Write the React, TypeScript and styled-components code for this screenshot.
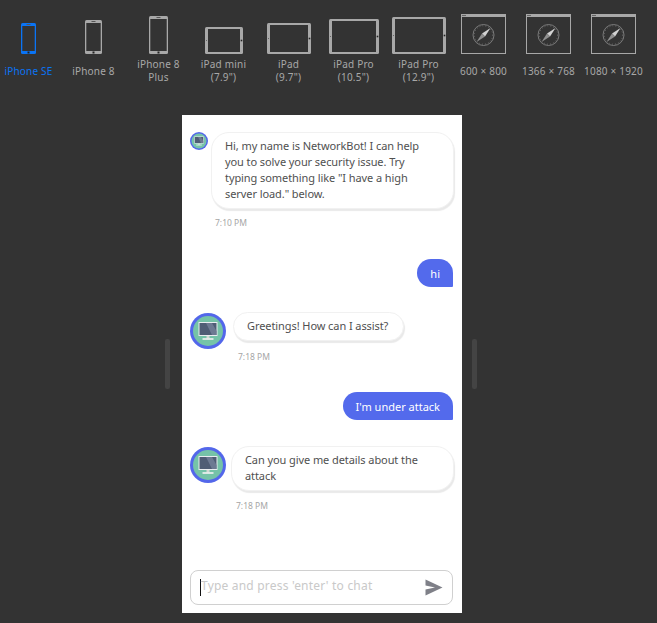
import React from "react";
import styled, { createGlobalStyle } from "styled-components";

const GlobalStyle = createGlobalStyle`
    html, body {
        margin: 0;
        height: 100%;
        background-color: #333333;
        overflow: hidden;
    }
    body {
        font-family: "Noto Sans", "Liberation Sans", sans-serif;
    }
`;

const Page = styled.div`
    width: 657px;
    height: 623px;
    overflow: hidden;
    background-color: #333333;
`;
const Toolbar = styled.div`
    display: flex;
    height: 115px;
    margin-left: -4px;
    padding-top: 14px;
    box-sizing: border-box;
`;
const DeviceTab = styled.div<{ $active?: boolean }>`
    flex: 0 0 65px;
    display: flex;
    flex-direction: column;
    align-items: center;
    color: ${(p) => (p.$active ? "#0a74f5" : "#a8a8a8")};
`;
const IconSlot = styled.div`
    height: 40px;
    display: flex;
    align-items: flex-end;
    justify-content: center;
`;
const TabLabel = styled.div`
    height: 26px;
    margin-top: 4px;
    display: flex;
    align-items: center;
    text-align: center;
    font-size: 10px;
    line-height: 13px;
    letter-spacing: 0.2px;
    white-space: pre-line;
`;
const Stage = styled.div`
    display: flex;
    align-items: center;
    padding-left: 165px;
`;
const Handle = styled.div`
    width: 5px;
    height: 50px;
    border-radius: 2px;
    background-color: #444444;
`;
const Device = styled.div`
    width: 280px;
    height: 498px;
    margin: 0 10px 0 12px;
    padding: 17px 8px 8px;
    box-sizing: border-box;
    display: flex;
    flex-direction: column;
    background-color: #ffffff;
`;
const BotRow = styled.div<{ $top: number; $gap: number }>`
    display: flex;
    align-items: flex-start;
    gap: ${(p) => p.$gap}px;
    margin-top: ${(p) => p.$top}px;
`;
const AvatarWrap = styled.div<{ $size: number; $inset: number }>`
    flex: none;
    width: ${(p) => p.$size}px;
    height: ${(p) => p.$size}px;
    margin-top: ${(p) => p.$inset}px;
    svg {
        display: block;
    }
`;
const BotColumn = styled.div<{ $fill?: boolean }>`
    display: flex;
    flex-direction: column;
    align-items: ${(p) => (p.$fill ? "stretch" : "flex-start")};
    flex: ${(p) => (p.$fill ? "1" : "none")};
    min-width: 0;
`;
const BotBubble = styled.div<{ $wide?: boolean }>`
    box-sizing: border-box;
    padding: 5px ${(p) => (p.$wide ? "20px" : "15px")} 6px 13px;
    border: 1px solid #f1f1f1;
    border-radius: 18px;
    background-color: #ffffff;
    box-shadow: 1px 2px 1px #e9e9e9;
    color: #505050;
    font-size: 11px;
    line-height: 16px;
    letter-spacing: -0.08px;
`;
const Time = styled.div<{ $gap: number; $left: number }>`
    margin: ${(p) => p.$gap}px 0 0 ${(p) => p.$left}px;
    height: 13px;
    color: #a6a6a6;
    font-size: 8.5px;
    line-height: 13px;
`;
const SentRow = styled.div<{ $top: number }>`
    display: flex;
    justify-content: flex-end;
    margin-right: 1px;
    margin-top: ${(p) => p.$top}px;
`;
const SentBubble = styled.div`
    height: 28px;
    padding: 0 13px;
    display: flex;
    align-items: center;
    border-radius: 14px 14px 1px 14px;
    background-color: #536aec;
    color: #ffffff;
    font-size: 11px;
`;
const InputBox = styled.div`
    margin-top: auto;
    height: 35px;
    width: 263px;
    box-sizing: border-box;
    padding: 0 9px;
    display: flex;
    align-items: center;
    border: 1px solid #d0d0d0;
    border-radius: 8px;
`;
const Caret = styled.div`
    flex: none;
    width: 1px;
    height: 17px;
    background-color: #111111;
`;
const Placeholder = styled.div`
    flex: 1;
    margin-top: -5px;
    color: #c9c9c9;
    font-size: 12px;
    letter-spacing: 0.2px;
`;
const SendIcon = styled.svg`
    flex: none;
    width: 18px;
    height: 17px;
    display: block;
`;

const Phone = ({ w, h }: { w: number; h: number }) => (
    <svg width={w} height={h} viewBox={`0 0 ${w} ${h}`} fill="currentColor">
        <rect width={w} height={h} rx="1.5" />
        <rect x="1.3" y="3" width={w - 2.6} height={h - 6} fill="#333333" />
        <rect x={w / 2 - 2} y="1" width="4" height="1" fill="#555555" />
        <rect x={w / 2 - 1} y={h - 2.5} width="2" height="2" fill="#222222" />
    </svg>
);

const Tablet = ({ w, h }: { w: number; h: number }) => (
    <svg width={w} height={h} viewBox={`0 0 ${w} ${h}`} fill="currentColor">
        <rect width={w} height={h} rx="1.5" />
        <rect x="3" y="2" width={w - 6} height={h - 4} fill="#333333" />
        <rect x="1" y={h / 2 - 0.5} width="1" height="1" fill="#666666" />
        <rect x={w - 2.3} y={h / 2 - 0.8} width="1.6" height="1.6" fill="#222222" />
    </svg>
);

const Browser = () => (
    <svg width="45" height="40" viewBox="0 0 45 40" fill="none">
        <rect x="0.5" y="0.5" width="44" height="39" stroke="#a8a8a8" />
        <rect width="45" height="3" fill="#a8a8a8" />
        <rect x="1" y="1" width="4" height="1" fill="#666666" />
        <circle cx="22.5" cy="21" r="10.5" stroke="#8c8c8c" strokeWidth="0.8" />
        <circle cx="22.5" cy="21" r="9.2" stroke="#777777" strokeWidth="1" strokeDasharray="0.8 2.2" />
        <path d="M29.5 14 L24 22.5 L21 19.5 Z" fill="#d2d2d2" />
        <path d="M15.5 28 L21 19.5 L24 22.5 Z" fill="#8f8f8f" />
    </svg>
);

const Avatar = ({ size }: { size: number }) => (
    <svg width={size} height={size} viewBox="0 0 36 36">
        <circle cx="18" cy="18" r="18" fill="#5367ea" />
        <circle cx="18" cy="18" r="15" fill="#75c3a8" />
        <rect x="8.5" y="9" width="19" height="14" fill="#e9edf0" />
        <rect x="9.5" y="10" width="17" height="12" fill="#4f5d75" />
        <path d="M16 10 H22 L26.5 18 V22 H22 Z" fill="#6d7a92" />
        <rect x="16.5" y="23" width="3" height="2.5" fill="#d5d9d6" />
        <rect x="12.5" y="25.2" width="11" height="1.6" fill="#f3f3f3" />
    </svg>
);

const tabs = [
    { label: "iPhone SE", icon: <Phone w={15} h={31} />, active: true },
    { label: "iPhone 8", icon: <Phone w={17} h={34} /> },
    { label: "iPhone 8\nPlus", icon: <Phone w={19} h={38} /> },
    { label: "iPad mini\n(7.9\")", icon: <Tablet w={38} h={27} /> },
    { label: "iPad\n(9.7\")", icon: <Tablet w={44} h={31} /> },
    { label: "iPad Pro\n(10.5\")", icon: <Tablet w={50} h={35} /> },
    { label: "iPad Pro\n(12.9\")", icon: <Tablet w={54} h={37} /> },
    { label: "600 × 800", icon: <Browser /> },
    { label: "1366 × 768", icon: <Browser /> },
    { label: "1080 × 1920", icon: <Browser /> },
];

const App = () => {
    return (
        <Page>
            <GlobalStyle />
            <Toolbar>
                {tabs.map((tab) => (
                    <DeviceTab key={tab.label} $active={tab.active}>
                        <IconSlot>{tab.icon}</IconSlot>
                        <TabLabel>{tab.label}</TabLabel>
                    </DeviceTab>
                ))}
            </Toolbar>
            <Stage>
                <Handle />
                <Device>
                    <BotRow $top={0} $gap={3}>
                        <AvatarWrap $size={18} $inset={0}>
                            <Avatar size={18} />
                        </AvatarWrap>
                        <BotColumn $fill>
                            <BotBubble $wide>
                                Hi, my name is NetworkBot! I can help you to solve your security issue. Try typing
                                something like "I have a high server load." below.
                            </BotBubble>
                            <Time $gap={7} $left={4}>7:10 PM</Time>
                        </BotColumn>
                    </BotRow>
                    <SentRow $top={30}>
                        <SentBubble>hi</SentBubble>
                    </SentRow>
                    <BotRow $top={25} $gap={7}>
                        <AvatarWrap $size={36} $inset={1}>
                            <Avatar size={36} />
                        </AvatarWrap>
                        <BotColumn>
                            <BotBubble>Greetings! How can I assist?</BotBubble>
                            <Time $gap={9} $left={5}>7:18 PM</Time>
                        </BotColumn>
                    </BotRow>
                    <SentRow $top={29}>
                        <SentBubble>I'm under attack</SentBubble>
                    </SentRow>
                    <BotRow $top={26} $gap={5}>
                        <AvatarWrap $size={36} $inset={1}>
                            <Avatar size={36} />
                        </AvatarWrap>
                        <BotColumn $fill>
                            <BotBubble $wide>Can you give me details about the attack</BotBubble>
                            <Time $gap={8} $left={5}>7:18 PM</Time>
                        </BotColumn>
                    </BotRow>
                    <InputBox>
                        <Caret />
                        <Placeholder>Type and press 'enter' to chat</Placeholder>
                        <SendIcon viewBox="0 0 18 17">
                            <path d="M0.5 0.5 L17.5 8.5 L0.5 16.5 V10.5 L10 8.5 L0.5 6.5 Z" fill="#7f8088" />
                        </SendIcon>
                    </InputBox>
                </Device>
                <Handle />
            </Stage>
        </Page>
    );
};

export default App;
